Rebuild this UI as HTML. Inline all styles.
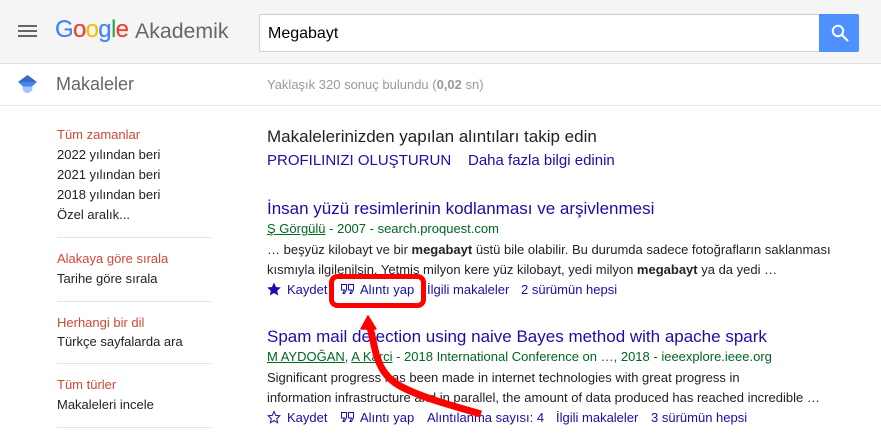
<!DOCTYPE html>
<html><head><meta charset="utf-8">
<style>
html,body{margin:0;padding:0;background:#fff}
body{width:881px;height:440px;overflow:hidden;position:relative;font-family:"Liberation Sans",Arial,sans-serif}
.t{position:absolute;white-space:nowrap}
.s{font-size:13px;line-height:16px}
.p{color:#222}
.a{color:#006621}
.g{font-size:13px;line-height:16px;color:#222}
.r{font-size:13px;line-height:16px;color:#d14836}
.h{position:absolute;left:57px;width:154px;height:1px;background:#e4e4e4}
.ttl{font-size:17px;line-height:20px;color:#1a0dab}
.lk{font-size:13px;line-height:16px;color:#1a0dab}
u{text-decoration:underline}
</style></head><body>
<div style="position:absolute;left:0;top:0;width:881px;height:63px;background:#f5f5f5;border-bottom:1px solid #e0e0e0"></div>
<div style="position:absolute;left:18px;top:25px;width:19px;height:2px;background:#666"></div>
<div style="position:absolute;left:18px;top:30px;width:19px;height:2px;background:#666"></div>
<div style="position:absolute;left:18px;top:35px;width:19px;height:2px;background:#666"></div>
<div class="t" style="left:55px;top:13px;font-size:24px;line-height:34px;letter-spacing:-.7px;-webkit-text-stroke:.2px"><span style="color:#4285f4">G</span><span style="color:#ea4335">o</span><span style="color:#fbbc05">o</span><span style="color:#4285f4">g</span><span style="color:#34a853">l</span><span style="color:#ea4335">e</span></div>
<div class="t" style="left:135px;top:17px;font-size:21.300px;line-height:28px;color:#666">Akademik</div>
<div style="position:absolute;left:259px;top:14px;width:559px;height:36px;background:#fff;border:1px solid #d0d0d0;border-right:0;box-sizing:content-box"></div>
<div class="t" style="left:268px;top:24px;font-size:16px;line-height:19px;color:#000">Megabayt</div>
<div style="position:absolute;left:819px;top:14px;width:40px;height:38px;background:#4d90fe;border-radius:0 2px 2px 0"></div>
<svg style="position:absolute;left:829px;top:22px" width="22" height="22" viewBox="0 0 22 22"><circle cx="9" cy="9" r="5.200" fill="none" stroke="#fff" stroke-width="2"/><path d="M13 13l6 6" stroke="#fff" stroke-width="2.200"/></svg>

<svg style="position:absolute;left:0;top:0" width="60" height="100" viewBox="0 0 60 100"><circle cx="27.500" cy="88" r="5" fill="#a1c2fa"/><path d="M18 82L37 82 32 86.500H23z" fill="#4285f4"/><path d="M18 82L27.500 75 37 82z" fill="#356ac3"/></svg>
<div class="t" style="left:56px;top:73px;font-size:18px;line-height:22px;color:#666">Makaleler</div>
<div class="t" style="left:267px;top:77px;font-size:13px;line-height:16px;color:#999">Yaklaşık 320 sonuç bulundu (<b>0,02</b> sn)</div>
<div style="position:absolute;left:0;top:105px;width:881px;height:1px;background:#e8e8e8"></div>

<div class="t r" style="left:57px;top:127px">Tüm zamanlar</div>
<div class="t g" style="left:57px;top:147px">2022 yılından beri</div>
<div class="t g" style="left:57px;top:167px">2021 yılından beri</div>
<div class="t g" style="left:57px;top:187px">2018 yılından beri</div>
<div class="t g" style="left:57px;top:207px">Özel aralık...</div>
<div class="h" style="top:237px"></div>
<div class="t r" style="left:57px;top:251px">Alakaya göre sırala</div>
<div class="t g" style="left:57px;top:271px">Tarihe göre sırala</div>
<div class="h" style="top:301px"></div>
<div class="t r" style="left:57px;top:315px">Herhangi bir dil</div>
<div class="t g" style="left:57px;top:334px">Türkçe sayfalarda ara</div>
<div class="h" style="top:363px"></div>
<div class="t r" style="left:57px;top:377px">Tüm türler</div>
<div class="t g" style="left:57px;top:397px">Makaleleri incele</div>
<div class="h" style="top:427px"></div>

<div class="t" style="left:267px;top:127px;font-size:17px;line-height:20px;color:#222">Makalelerinizden yapılan alıntıları takip edin</div>
<div class="t" style="left:267px;top:152px;font-size:15px;line-height:18px;color:#1a0dab">PROFILINIZI OLUŞTURUN</div>
<div class="t" style="left:468px;top:152px;font-size:15px;line-height:18px;color:#1a0dab">Daha fazla bilgi edinin</div>

<div class="t ttl" style="left:267px;top:199px">İnsan yüzü resimlerinin kodlanması ve arşivlenmesi</div>
<div class="t s a" style="left:267px;top:221px"><u>Ş Görgülü</u> - 2007 - search.proquest.com</div>
<div class="t s p" style="left:267px;top:242px">… beşyüz kilobayt ve bir <b>megabayt</b> üstü bile olabilir. Bu durumda sadece fotoğrafların saklanması</div>
<div class="t s p" style="left:267px;top:262px">kısmıyla ilgilenilsin. Yetmiş milyon kere yüz kilobayt, yedi milyon <b>megabayt</b> ya da yedi …</div>
<svg style="position:absolute;left:267px;top:282px" width="14" height="14" viewBox="0 0 14 14"><path d="M7 .5l2 4.500 4.800.5-3.600 3.200 1 4.800L7 11l-4.200 2.500 1-4.800L.2 5.500 5 5z" fill="#1a0dab"/></svg>
<div class="t lk" style="left:287px;top:282px">Kaydet</div>
<svg style="position:absolute;left:340px;top:283px" width="16" height="13" viewBox="0 0 16 13"><path d="M1.500 1.500h5v5l-2 4h-1.500l1.500-3.500H1.500z M8.500 1.500h5v5l-2 4H10l1.500-3.500H8.500z" fill="none" stroke="#1a0dab"/></svg>
<div class="t lk" style="left:360px;top:282px">Alıntı yap</div>
<div class="t lk" style="left:427px;top:282px">İlgili makaleler</div>
<div class="t lk" style="left:521px;top:282px">2 sürümün hepsi</div>

<div class="t ttl" style="left:267px;top:327px">Spam mail detection using naive Bayes method with apache spark</div>
<div class="t s a" style="left:267px;top:349px"><u>M AYDOĞAN</u>, <u>A Karci</u> - 2018 International Conference on …, 2018 - ieeexplore.ieee.org</div>
<div class="t s p" style="left:267px;top:370px">Significant progress has been made in internet technologies with great progress in</div>
<div class="t s p" style="left:267px;top:390px">information infrastructure and in parallel, the amount of data produced has reached incredible …</div>
<svg style="position:absolute;left:267px;top:410px" width="14" height="14" viewBox="0 0 14 14"><path d="M7 1.500l1.700 3.900 4.100.4-3.100 2.800.9 4.100L7 10.600l-3.600 2.100.9-4.100-3.100-2.800 4.100-.4z" fill="none" stroke="#1a0dab"/></svg>
<div class="t lk" style="left:287px;top:410px">Kaydet</div>
<svg style="position:absolute;left:340px;top:411px" width="16" height="13" viewBox="0 0 16 13"><path d="M1.500 1.500h5v5l-2 4h-1.500l1.500-3.500H1.500z M8.500 1.500h5v5l-2 4H10l1.500-3.500H8.500z" fill="none" stroke="#1a0dab"/></svg>
<div class="t lk" style="left:360px;top:410px">Alıntı yap</div>
<div class="t lk" style="left:427px;top:410px">Alıntılanma sayısı: 4</div>
<div class="t lk" style="left:556px;top:410px">İlgili makaleler</div>
<div class="t lk" style="left:651px;top:410px">3 sürümün hepsi</div>

<svg style="position:absolute;left:0;top:0" width="881" height="440" viewBox="0 0 881 440">
<rect x="331.500" y="276.500" width="92" height="29" rx="6" fill="none" stroke="#f00" stroke-width="5"/>
<path d="M481 414C450 405 420 397 400 386C382 376 377 360 374 345C372 335 370 328 369 322" fill="none" stroke="#f00" stroke-width="7"/>
<path d="M368 316L376 329H361Z" fill="#f00" stroke="#f00" stroke-width="1.500" stroke-linejoin="round"/>
</svg>
</body></html>
